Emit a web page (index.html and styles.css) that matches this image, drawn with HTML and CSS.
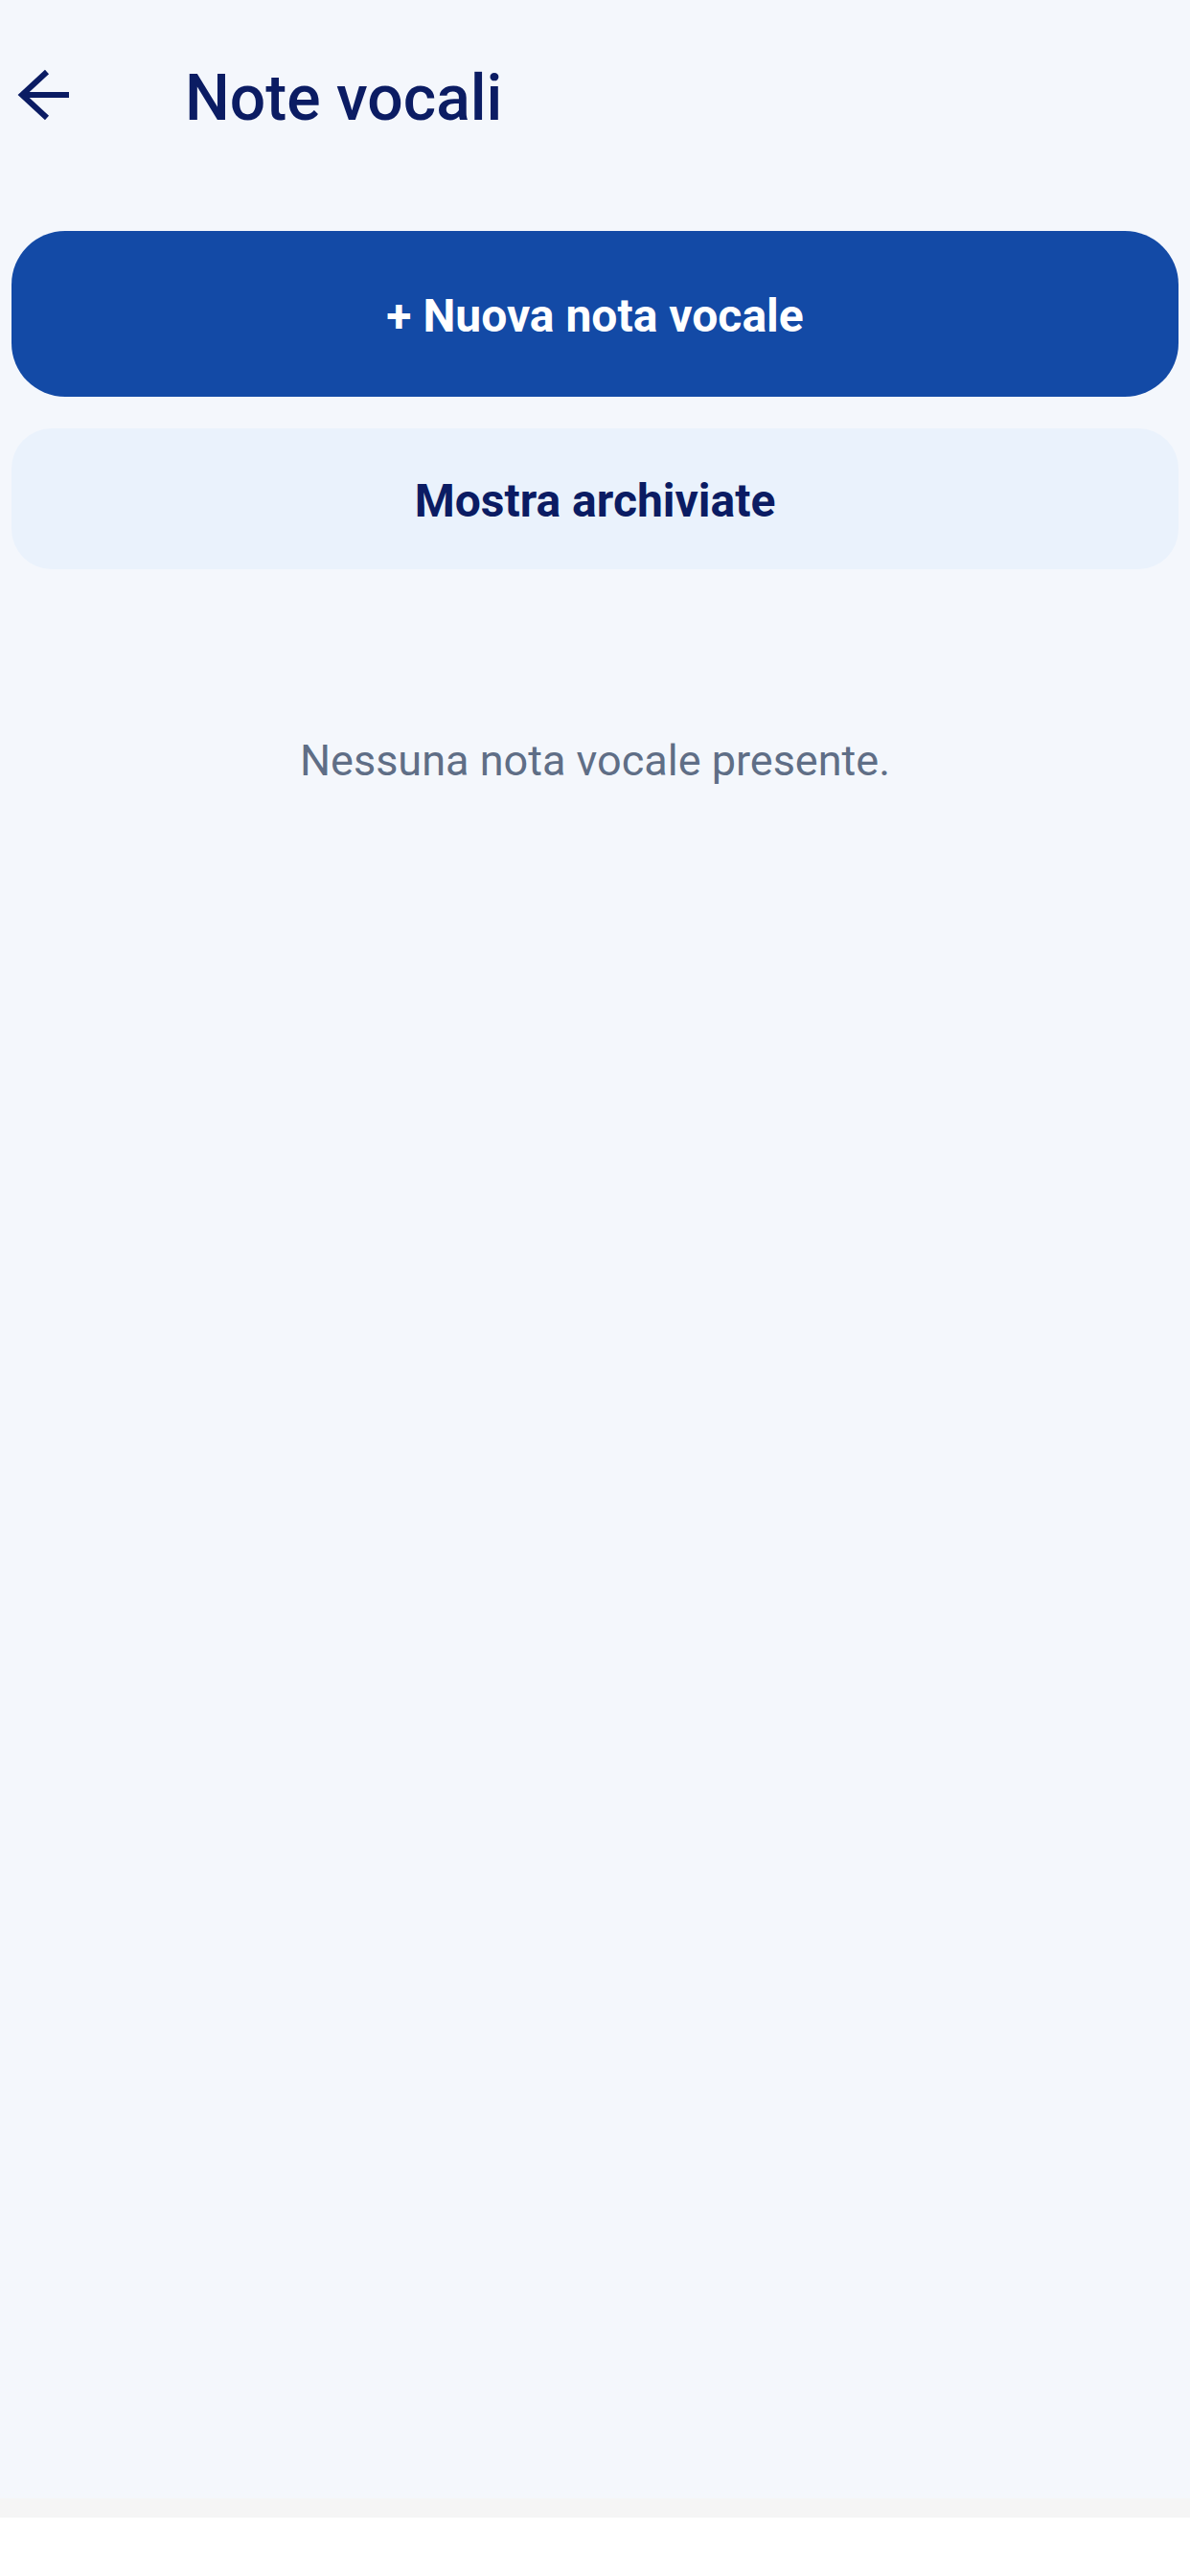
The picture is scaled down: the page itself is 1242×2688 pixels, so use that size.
FILE: index.html
```html
<!DOCTYPE html>
<html lang="it">
  <head>
    <meta charset="utf-8" />
    <title>Note vocali</title>
    <link rel="stylesheet" href="styles.css">
  </head>
  <body>
    <div class="schermo">
      <header class="testata">
        <svg class="indietro" width="56" height="56" viewBox="0 0 56 56">
          <path d="M31 4 L5 28 L31 52 M5 28 H54" fill="none" stroke="#0b1c63" stroke-width="6"/>
        </svg>
        <h1 class="titolo">Note vocali</h1>
      </header>
      <main class="contenuto">
        <button class="btn btn-primario">+ Nuova nota vocale</button>
        <button class="btn btn-secondario">Mostra archiviate</button>
        <p class="vuoto">Nessuna nota vocale presente.</p>
      </main>
      <div class="barra-nav"></div>
    </div>
  </body>
</html>
```

FILE: styles.css
```css
body{
  margin: 0;
  background: #ffffff;
  font-family: Roboto, "Noto Sans", sans-serif;
}
.schermo{
  height: 2688px;
  display: flex;
  flex-direction: column;
  background: #f4f7fc;
}
.testata{
  height: 196px;
  display: flex;
  align-items: center;
  padding-left: 18px;
}
.indietro{
  display: block;
  margin-top: 2px;
}
.titolo{
  margin: 0 0 0 119px;
  font-size: 66px;
  font-weight: 500;
  color: #0b1c63;
  line-height: 1;
  padding-top: 10px;
}
.contenuto{
  flex: 1;
  display: flex;
  flex-direction: column;
  padding: 45px 12px 0;
}
.btn{
  border: none;
  width: 100%;
  font-family: Roboto, "Noto Sans", sans-serif;
  font-weight: 700;
  display: flex;
  align-items: center;
  justify-content: center;
  padding: 0;
}
.btn-primario{
  height: 173px;
  border-radius: 56px;
  background: #134aa6;
  color: #ffffff;
  font-size: 48px;
  padding-top: 4px;
}
.btn-secondario{
  margin-top: 33px;
  height: 147px;
  border-radius: 42px;
  background: #eaf2fc;
  color: #0b1c63;
  font-size: 48px;
  padding-top: 4px;
}
.vuoto{
  margin: 173px 0 0;
  text-align: center;
  font-size: 45px;
  line-height: 54px;
  color: #5f6e86;
}
.barra-nav{
  height: 81px;
  background: #ffffff;
  border-top: 20px solid #f5f5f5;
  box-sizing: border-box;
}
```
